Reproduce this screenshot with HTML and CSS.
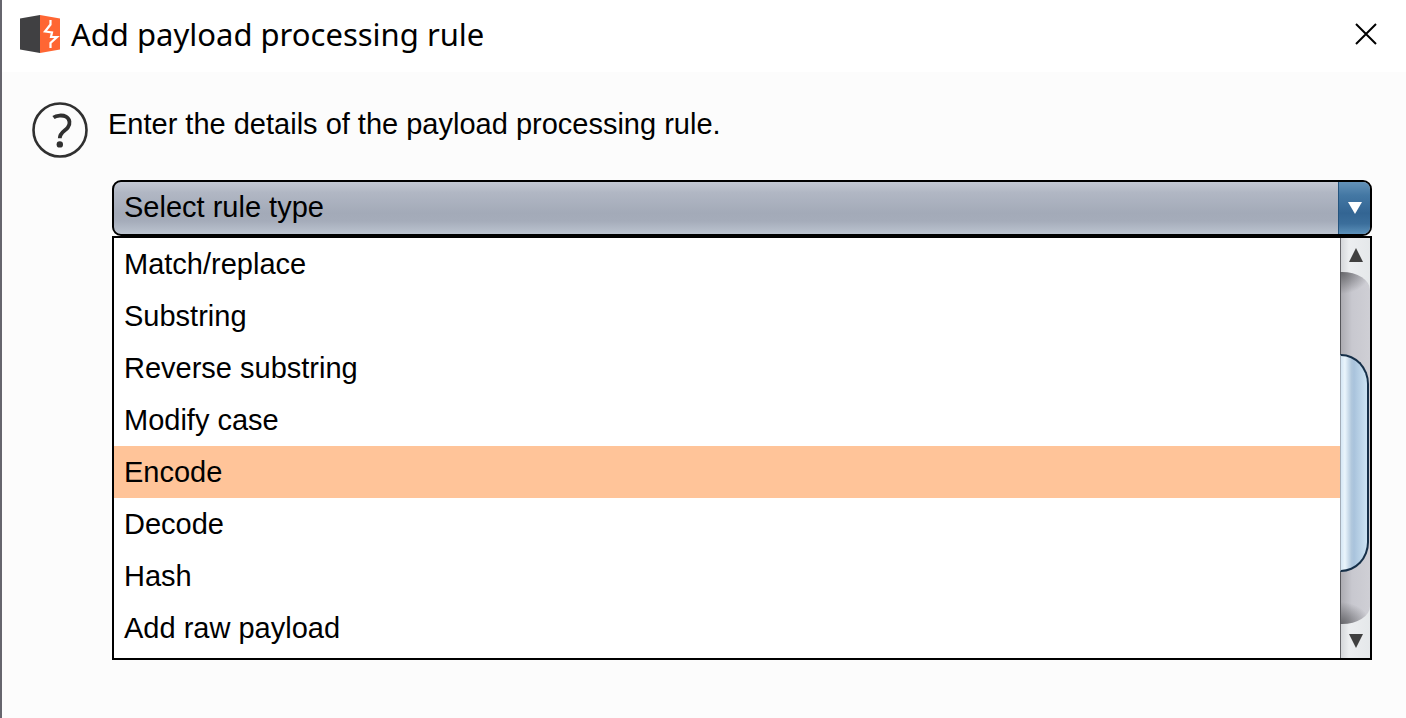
FILE: index.html
```html
<!DOCTYPE html>
<html lang="en">
<head>
<meta charset="utf-8">
<meta name="viewport" content="width=device-width, initial-scale=1">
<title>Add payload processing rule</title>
<link rel="stylesheet" href="styles.css">
</head>
<body>
<main class="dialog">
  <header class="titlebar">
    <svg class="logo" viewBox="0 0 40 38" aria-hidden="true">
      <path fill="#404042" d="M0 3.500 20 0v38L0 34.500z"/>
      <path fill="#ff6633" d="M20 0 40 3.500v31L20 38z"/>
      <path fill="none" stroke="#fff" stroke-width="2.200" d="M30.500 5v4.500l-5.500 7 7 1-1 4.500h6l-6.500 6v5"/>
    </svg>
    <h1 class="title">Add payload processing rule</h1>
    <button class="close" type="button" aria-label="Close">
      <svg viewBox="0 0 22 22" aria-hidden="true"><path fill="none" stroke="#000" stroke-width="2" d="m1 1 20 20M21 1 1 21"/></svg>
    </button>
  </header>
  <section class="content">
    <div class="intro">
      <button class="help" type="button" aria-label="Help">
        <svg viewBox="0 0 56 56" aria-hidden="true">
          <circle cx="28" cy="28" r="26.5" fill="none" stroke="#303030" stroke-width="2.6"/>
          <path d="M21.500 15.500c3-2.200 9-2.800 12.500-.8 4 2.300 4.600 7.300 1.800 10.800-2.700 3.500-8 5-8 10.700" fill="none" stroke="#303030" stroke-width="3.800"/>
          <circle cx="27.800" cy="42.400" r="3.200" fill="#303030"/>
        </svg>
      </button>
      <label class="prompt" for="rule-type">Enter the details of the payload processing rule.</label>
    </div>
    <div class="picker">
      <div class="combo">
        <select class="combo-select" id="rule-type">
          <option>Select rule type</option>
        </select>
        <span class="combo-arrow" aria-hidden="true">
          <svg viewBox="0 0 14 12"><path fill="#fff" d="M0 0h14L7 12z"/></svg>
        </span>
      </div>
      <div class="popup">
        <ul class="options" role="listbox" aria-label="Rule type">
          <li class="option" role="option">Match/replace</li>
          <li class="option" role="option">Substring</li>
          <li class="option" role="option">Reverse substring</li>
          <li class="option" role="option">Modify case</li>
          <li class="option option-active" role="option" aria-selected="true">Encode</li>
          <li class="option" role="option">Decode</li>
          <li class="option" role="option">Hash</li>
          <li class="option" role="option">Add raw payload</li>
        </ul>
        <div class="scrollbar">
          <button class="scroll-button" type="button" aria-label="Scroll up">
            <svg viewBox="0 0 14 14" aria-hidden="true"><path fill="#404040" d="M7 0l7 14H0z"/></svg>
          </button>
          <div class="track"><div class="thumb"></div></div>
          <button class="scroll-button" type="button" aria-label="Scroll down">
            <svg viewBox="0 0 14 14" aria-hidden="true"><path fill="#404040" d="M0 0h14L7 14z"/></svg>
          </button>
        </div>
      </div>
    </div>
  </section>
</main>
</body>
</html>
```
FILE: styles.css
```css
* {
  box-sizing: border-box;
}

body {
  margin: 0;
  background: #fcfcfc;
  color: #000;
  font-family: "Liberation Sans", Arial, sans-serif;
  font-size: 29px;
}

button {
  padding: 0;
  border: 0;
  background: none;
}

svg {
  display: block;
}

.dialog {
  min-height: 100vh;
  border-left: 2px solid #66656d;
}

.titlebar {
  display: flex;
  align-items: center;
  height: 72px;
  padding: 0 29px 4px 18px;
  background: #fff;
}

.logo {
  width: 40px;
  height: 38px;
}

.title {
  flex: 1;
  margin: 0 0 0 11px;
  font-family: "Noto Sans", "Open Sans", sans-serif;
  font-size: 31px;
  font-weight: 400;
  line-height: 44px;
}

.close {
  width: 22px;
  height: 22px;
}

.content {
  padding: 30px 34px 30px 30px;
}

.intro {
  display: flex;
  gap: 20px;
}

.help {
  width: 56px;
  height: 56px;
}

.prompt {
  line-height: 44px;
}

.picker {
  margin: 22px 0 0 80px;
}

.combo {
  display: flex;
  height: 56px;
  overflow: hidden;
  border: 2px solid #000;
  border-radius: 9px;
  background: linear-gradient(#c3c8d3, #b1b7c4 20%, #a3aab8 60%, #a5acba 75%, #bcc4d0);
}

.combo-select {
  flex: 1;
  min-width: 0;
  padding: 0 10px 2px;
  appearance: none;
  border: 0;
  background: none;
  color: #000;
  font: inherit;
}

.combo-arrow {
  display: flex;
  align-items: center;
  justify-content: center;
  width: 32px;
  border-left: 1px solid #24547e;
  background: linear-gradient(#6492b8, #4478a4 25%, #336593 60%, #3b6e9b 80%, #5c91ba);
}

.combo-arrow svg {
  width: 14px;
  height: 12px;
}

.popup {
  display: flex;
  border: 2px solid #000;
  background: #fff;
}

.options {
  flex: 1;
  margin: 0;
  padding: 0 0 4px;
  list-style: none;
}

.option {
  padding: 0 10px;
  line-height: 52px;
}

.option-active {
  background: #ffc499;
}

.scrollbar {
  display: flex;
  flex-direction: column;
  width: 30px;
  background: linear-gradient(90deg, #d2d4d7, #eceef0 30%, #e5e8ea);
}

.scroll-button {
  display: flex;
  align-items: center;
  justify-content: center;
  height: 34px;
  border-left: 1px solid #66666a;
}

.scroll-button svg {
  width: 14px;
  height: 14px;
}

.track {
  flex: 1;
  padding-top: 82px;
  overflow: hidden;
  border-radius: 0 28px 28px 0 / 0 18px 18px 0;
  background:
    linear-gradient(90deg, #55555a 1px, transparent 1px),
    radial-gradient(30px 22px at 0 0, #66666a, transparent),
    radial-gradient(30px 22px at 0 100%, #66666a, transparent),
    linear-gradient(90deg, #aaa9af, #c8c8cf 40%, #cfcfd5);
}

.thumb {
  height: 218px;
  margin-right: 1px;
  border: 2px solid #152f48;
  border-left: 1px solid #a3adb8;
  border-radius: 0 28px 28px 0 / 0 30px 30px 0;
  background: linear-gradient(90deg, #d5e7f5, #eaf5fc 15%, #b1c8dd 40%, #a9c3dc 50%, #cce3f3);
}
```
